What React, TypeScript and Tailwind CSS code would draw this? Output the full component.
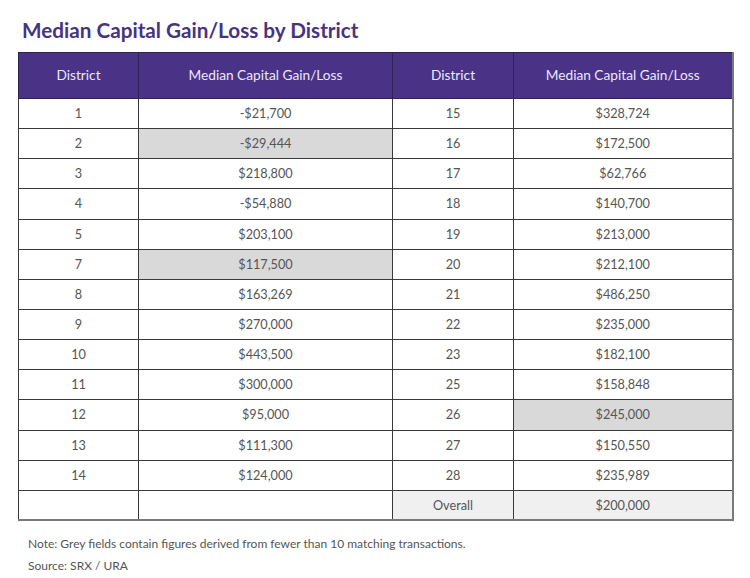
import React from "react";

type Row = { d1: string; v1: string; g1?: boolean; d2: string; v2: string; g2?: boolean };

const rows: Row[] = [
  { d1: "1", v1: "-$21,700", d2: "15", v2: "$328,724" },
  { d1: "2", v1: "-$29,444", g1: true, d2: "16", v2: "$172,500" },
  { d1: "3", v1: "$218,800", d2: "17", v2: "$62,766" },
  { d1: "4", v1: "-$54,880", d2: "18", v2: "$140,700" },
  { d1: "5", v1: "$203,100", d2: "19", v2: "$213,000" },
  { d1: "7", v1: "$117,500", g1: true, d2: "20", v2: "$212,100" },
  { d1: "8", v1: "$163,269", d2: "21", v2: "$486,250" },
  { d1: "9", v1: "$270,000", d2: "22", v2: "$235,000" },
  { d1: "10", v1: "$443,500", d2: "23", v2: "$182,100" },
  { d1: "11", v1: "$300,000", d2: "25", v2: "$158,848" },
  { d1: "12", v1: "$95,000", d2: "26", v2: "$245,000", g2: true },
  { d1: "13", v1: "$111,300", d2: "27", v2: "$150,550" },
  { d1: "14", v1: "$124,000", d2: "28", v2: "$235,989" },
];

const cell = "border border-[#3a3a3a] h-[30.15px] p-0 text-center text-[12.7px] text-[#555]";
const head = "border border-[#2e2450] h-[46px] p-0 text-center text-[13.7px] font-normal text-[#ece8f7]";

export default function App() {
  return (
    <div className="w-[750px] h-[578px] bg-white font-['Lato','Open_Sans',sans-serif]">
      <h1 className="pl-[22px] pt-[17px] text-[20.7px] font-bold leading-[26px] text-[#47337f]">
        Median Capital Gain/Loss by District
      </h1>
      <table className="ml-[18px] mt-[9px] w-[714px] border-collapse border-r-2 border-b-2 border-r-[#7a7a7a] border-b-[#7a7a7a] table-fixed">
        <colgroup>
          <col className="w-[120px]" />
          <col className="w-[254px]" />
          <col className="w-[121px]" />
          <col className="w-[219px]" />
        </colgroup>
        <thead>
          <tr className="bg-[#4a3287]">
            <th className={head}>District</th>
            <th className={head}>Median Capital Gain/Loss</th>
            <th className={head}>District</th>
            <th className={head}>Median Capital Gain/Loss</th>
          </tr>
        </thead>
        <tbody>
          {rows.map((r) => (
            <tr key={r.d1}>
              <td className={cell}>{r.d1}</td>
              <td className={`${cell} ${r.g1 ? "bg-[#d9d9d9]" : ""}`}>{r.v1}</td>
              <td className={cell}>{r.d2}</td>
              <td className={`${cell} ${r.g2 ? "bg-[#d9d9d9]" : ""}`}>{r.v2}</td>
            </tr>
          ))}
          <tr>
            <td className={cell}></td>
            <td className={cell}></td>
            <td className={`${cell} bg-[#f0f0f0] text-[#4d3d87]`}>Overall</td>
            <td className={`${cell} bg-[#f0f0f0] text-[#4d3d87]`}>$200,000</td>
          </tr>
        </tbody>
      </table>
      <p className="pl-[28px] pt-[16px] text-[12px] leading-[14px] text-[#555]">
        Note: Grey fields contain figures derived from fewer than 10 matching transactions.
      </p>
      <p className="pl-[28px] pt-[8px] text-[12px] leading-[14px] text-[#555]">Source: SRX / URA</p>
    </div>
  );
}
